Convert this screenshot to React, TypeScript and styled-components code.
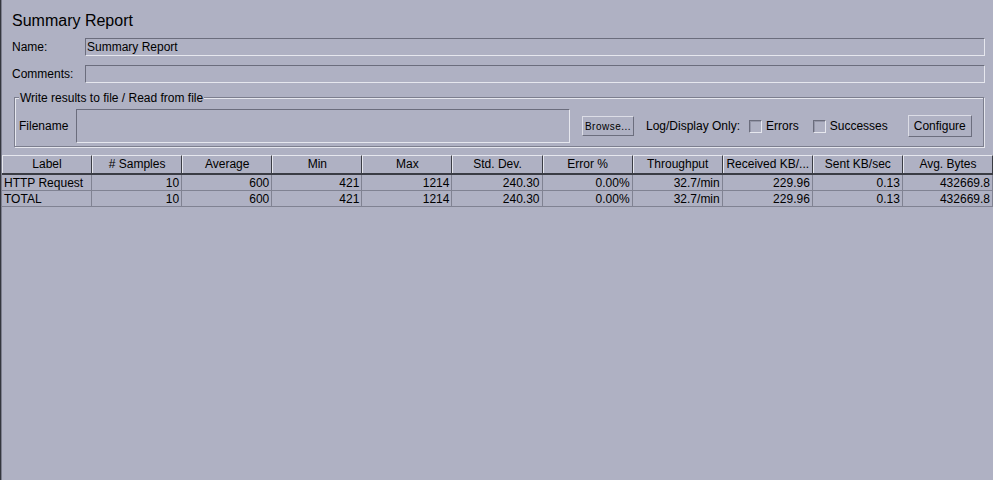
import React from "react";
import styled, { createGlobalStyle } from "styled-components";

const BG = "#afb1c3";
const DARK = "#6b6d7d";
const LIGHT = "#e6e7ee";
const GRID = "#808292";
const HDARK = "#3a3c44";

const GlobalStyle = createGlobalStyle`
  html, body { margin: 0; padding: 0; background: ${BG}; }
  body { font-family: "Liberation Sans", Arial, sans-serif; font-size: 12px; color: #000; }
  * { box-sizing: border-box; }
`;

const Page = styled.div`
  width: 993px;
  height: 480px;
  overflow: hidden;
  background: ${BG};
  border-left: 1px solid #34363e;
  box-shadow: inset 1px 0 0 #7c7e8e;
  display: flex;
  flex-direction: column;
`;

const Top = styled.div`
  padding: 11px 8px 0 11px;
  display: flex;
  flex-direction: column;
`;

const Title = styled.div`
  font-size: 16px;
  line-height: 19px;
  margin-bottom: 8px;
`;

const FormRow = styled.div<{ $gap?: number }>`
  display: grid;
  grid-template-columns: 73px 1fr;
  align-items: center;
  height: 18px;
  margin-bottom: ${(p) => p.$gap ?? 0}px;
`;

const FieldLabel = styled.span`
  line-height: 18px;
  white-space: nowrap;
`;

const TextField = styled.div<{ $h?: number; $w?: number }>`
  height: ${(p) => p.$h ?? 18}px;
  ${(p) => (p.$w ? `width: ${p.$w}px; flex: none;` : "")}
  border-top: 1px solid ${DARK};
  border-left: 1px solid ${DARK};
  border-bottom: 1px solid ${LIGHT};
  border-right: 1px solid ${LIGHT};
  padding: 0 1px;
  line-height: 16px;
  white-space: nowrap;
`;

const Group = styled.div`
  margin: 14px 1px 0 2px;
  border: 1px solid #7c7e8e;
  box-shadow: inset 1px 1px 0 ${LIGHT}, 1px 1px 0 ${LIGHT};
  padding: 0 0 3px 4px;
  display: flex;
  flex-direction: column;
`;

const GroupTitle = styled.div`
  width: fit-content;
  margin-top: -7px;
  height: 14px;
  line-height: 14px;
  padding: 0 1px;
  background: ${BG};
  white-space: nowrap;
`;

const FileRow = styled.div`
  margin-top: 4px;
  height: 34px;
  display: flex;
  align-items: center;
`;

const RowLabel = styled.span<{ $w?: number; $ml?: number }>`
  ${(p) => (p.$w ? `width: ${p.$w}px;` : "")}
  margin-left: ${(p) => p.$ml ?? 0}px;
  flex: none;
  white-space: nowrap;
`;

const Button = styled.button<{ $small?: boolean; $w: number; $h: number; $ml: number }>`
  all: unset;
  box-sizing: border-box;
  flex: none;
  width: ${(p) => p.$w}px;
  height: ${(p) => p.$h}px;
  margin-left: ${(p) => p.$ml}px;
  border-style: solid;
  border-width: 1px;
  border-color: #dcdde6 #6c6e7e #6c6e7e #dcdde6;
  font-family: "Liberation Sans", Arial, sans-serif;
  font-size: ${(p) => (p.$small ? 10 : 12)}px;
  letter-spacing: ${(p) => (p.$small ? 0.5 : 0)}px;
  color: #000;
  display: flex;
  align-items: center;
  justify-content: center;
`;

const CheckItem = styled.label<{ $ml: number }>`
  display: flex;
  align-items: center;
  gap: 4px;
  margin-left: ${(p) => p.$ml}px;
  flex: none;
  white-space: nowrap;
`;

const Box = styled.span`
  width: 13px;
  height: 13px;
  border-style: solid;
  border-width: 1px;
  border-color: ${DARK} ${LIGHT} ${LIGHT} ${DARK};
  box-shadow: inset 1px 1px 0 #9496a8;
`;

const Table = styled.div`
  margin: 8px 0 0 1px;
  width: 991px;
  display: flex;
  flex-direction: column;
`;

const HeaderRow = styled.div`
  display: grid;
  grid-template-columns: repeat(11, 1fr);
  border-bottom: 2px solid ${HDARK};
`;

const HeaderCell = styled.div`
  height: 18px;
  border-top: 1px solid ${LIGHT};
  border-left: 1px solid ${LIGHT};
  border-right: 1px solid ${HDARK};
  line-height: 17px;
  text-align: center;
  white-space: nowrap;
  overflow: hidden;
`;

const BodyRow = styled.div`
  display: grid;
  grid-template-columns: repeat(11, 1fr);
`;

const Cell = styled.div<{ $left?: boolean }>`
  height: 16px;
  border-right: 1px solid ${GRID};
  border-bottom: 1px solid ${GRID};
  padding: 1px 2px 0 2px;
  line-height: 15px;
  text-align: ${(p) => (p.$left ? "left" : "right")};
  white-space: nowrap;
  overflow: hidden;
`;

const headers = [
  "Label",
  "# Samples",
  "Average",
  "Min",
  "Max",
  "Std. Dev.",
  "Error %",
  "Throughput",
  "Received KB/...",
  "Sent KB/sec",
  "Avg. Bytes",
];

const rows = [
  ["HTTP Request", "10", "600", "421", "1214", "240.30", "0.00%", "32.7/min", "229.96", "0.13", "432669.8"],
  ["TOTAL", "10", "600", "421", "1214", "240.30", "0.00%", "32.7/min", "229.96", "0.13", "432669.8"],
];

export default function App() {
  return (
    <>
      <GlobalStyle />
      <Page>
        <Top>
          <Title>Summary Report</Title>
          <FormRow $gap={9}>
            <FieldLabel>Name:</FieldLabel>
            <TextField>Summary Report</TextField>
          </FormRow>
          <FormRow>
            <FieldLabel>Comments:</FieldLabel>
            <TextField />
          </FormRow>
          <Group>
            <GroupTitle>Write results to file / Read from file</GroupTitle>
            <FileRow>
              <RowLabel $w={57}>Filename</RowLabel>
              <TextField $h={34} $w={494} />
              <Button $small $w={52} $h={20} $ml={12}>Browse...</Button>
              <RowLabel $ml={12}>Log/Display Only:</RowLabel>
              <CheckItem $ml={9}>
                <Box />
                Errors
              </CheckItem>
              <CheckItem $ml={14}>
                <Box />
                Successes
              </CheckItem>
              <Button $w={64} $h={22} $ml={20}>Configure</Button>
            </FileRow>
          </Group>
        </Top>
        <Table>
          <HeaderRow>
            {headers.map((h) => (
              <HeaderCell key={h}>{h}</HeaderCell>
            ))}
          </HeaderRow>
          {rows.map((r, i) => (
            <BodyRow key={i}>
              {r.map((v, j) => (
                <Cell key={j} $left={j === 0}>
                  {v}
                </Cell>
              ))}
            </BodyRow>
          ))}
        </Table>
      </Page>
    </>
  );
}
